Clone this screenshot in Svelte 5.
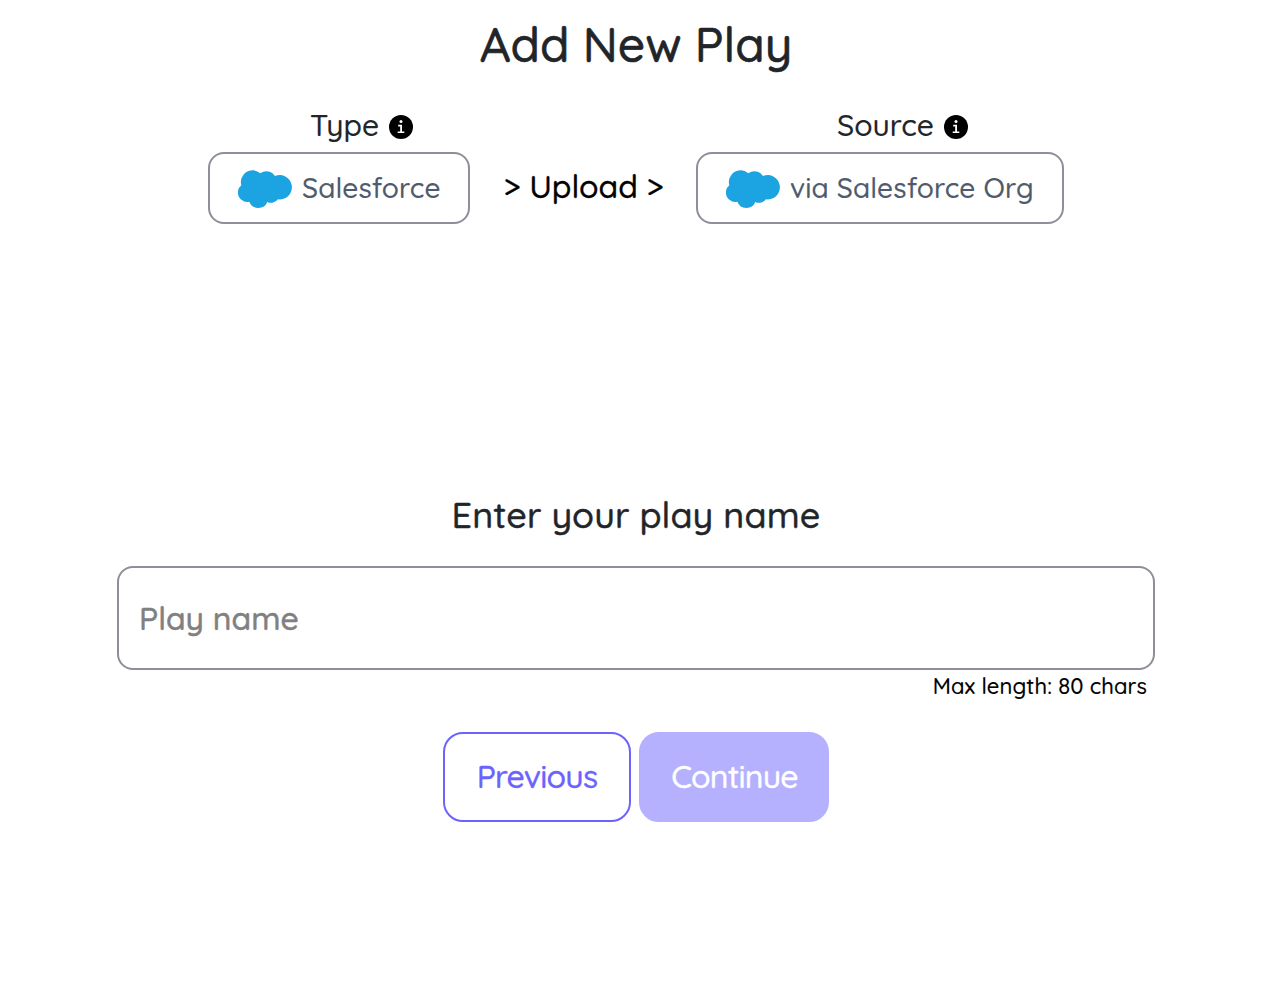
<script>
	let playName = '';

	const steps = [
		{ label: 'Type', value: 'Salesforce', kind: 'type' },
		{ label: 'Source', value: 'via Salesforce Org', kind: 'source' }
	];
</script>

<main>
	<h1><span>Add New Play</span></h1>

	<div class="steps">
		{#each steps as step, i}
			{#if i > 0}
				<div class="action"><span>&gt; Upload &gt;</span></div>
			{/if}
			<div class="step {step.kind}">
				<div class="label">
					<span>{step.label}</span>
					<svg class="info" viewBox="0 0 24 24">
						<circle cx="12" cy="12" r="12" />
						<circle class="mark" cx="12" cy="6.6" r="1.5" />
						<path class="mark" d="M9.2 9.8h3.8v6.7h2.3v1.6H8.7v-1.6h2.5v-5.1h-2z" />
					</svg>
				</div>
				<button class="choice">
					<svg class="cloud" viewBox="114 210 162 114">
						<path
							d="M124 256A35 35 0 0 1 181 220A30 30 0 0 1 225 228A36.6 36.6 0 1 1 234 298A26 26 0 0 1 202 306A29 29 0 0 1 148 305A28 28 0 0 1 124 256z"
						/>
					</svg>
					<span>{step.value}</span>
				</button>
			</div>
		{/each}
	</div>

	<h2><span>Enter your play name</span></h2>

	<input type="text" placeholder="Play name" maxlength="80" bind:value={playName} />
	<div class="hint"><span>Max length: 80 chars</span></div>

	<div class="buttons">
		<button class="previous"><span>Previous</span></button>
		<button class="continue" disabled={!playName}><span>Continue</span></button>
	</div>
</main>

<style>
	:global(body) {
		background: #fff;
	}
	main {
		box-sizing: border-box;
		width: 1272px;
		height: 990px;
		padding: 14px 117px 0;
		font-family: Quicksand, Lato, sans-serif;
		font-weight: 500;
		color: #212529;
		-webkit-text-stroke: 0.15px;
	}
	button,
	input {
		box-sizing: border-box;
		margin: 0;
		font: inherit;
		background: #fff;
	}
	span {
		white-space: nowrap;
	}
	h1,
	h2 {
		margin: 0;
		font-weight: 500;
		text-align: center;
	}
	h1 {
		height: 60px;
		font-size: 48px;
		line-height: 60px;
		-webkit-text-stroke: 0.6px;
	}
	.steps {
		display: flex;
		align-items: flex-end;
		margin: 32px 91px 0;
	}
	.step {
		display: flex;
		flex-direction: column;
		gap: 6px;
	}
	.type {
		width: 262px;
	}
	.source {
		width: 368px;
	}
	.label {
		display: flex;
		align-items: center;
		justify-content: center;
		gap: 10px;
		height: 40px;
		padding-left: 45px;
		font-size: 30px;
	}
	.label span {
		padding-bottom: 2px;
	}
	.info {
		width: 24px;
		height: 24px;
		margin-top: 2px;
	}
	.mark {
		fill: #fff;
	}
	.choice {
		display: flex;
		align-items: center;
		gap: 10px;
		height: 72px;
		padding: 0 28px;
		font-size: 28px;
		letter-spacing: 0.15px;
		color: #4f5b6d;
		border: 2px solid #8e8f98;
		border-radius: 16px;
	}
	.choice span {
		padding-bottom: 2px;
	}
	.cloud {
		flex: none;
		width: 54px;
		height: 38px;
		margin-top: 2px;
		fill: #1ba4e1;
	}
	.action {
		width: 226px;
		height: 72px;
		padding-left: 1px;
		box-sizing: border-box;
		font-size: 32px;
		line-height: 68px;
		text-align: center;
		color: #000;
		-webkit-text-stroke: 0.3px;
	}
	h2 {
		height: 46px;
		margin-top: 268px;
		font-size: 36px;
		line-height: 46px;
		letter-spacing: 0.08px;
		-webkit-text-stroke: 0.4px;
	}
	input {
		display: block;
		width: 1038px;
		height: 104px;
		margin-top: 28px;
		padding: 0 20px;
		font-size: 32px;
		border: 2px solid #8e8f98;
		border-radius: 16px;
	}
	input::placeholder {
		color: #808080;
		opacity: 1;
		-webkit-text-stroke: 0.5px;
	}
	.hint {
		height: 34px;
		padding-right: 8px;
		font-size: 22px;
		line-height: 32px;
		letter-spacing: 0.1px;
		text-align: right;
		color: #000;
	}
	.buttons {
		display: flex;
		justify-content: center;
		gap: 8px;
		margin-top: 28px;
	}
	.buttons button {
		height: 90px;
		padding: 0 0 2px;
		font-size: 32px;
		letter-spacing: -0.8px;
		border: 2px solid #6c63ff;
		border-radius: 20px;
		-webkit-text-stroke: 0.35px;
	}
	.buttons .previous {
		width: 188px;
		color: #6c63ff;
	}
	.buttons .continue {
		width: 190px;
		padding-left: 1px;
		color: #fff;
		background: #b5b1ff;
		border-color: #b5b1ff;
	}
</style>
